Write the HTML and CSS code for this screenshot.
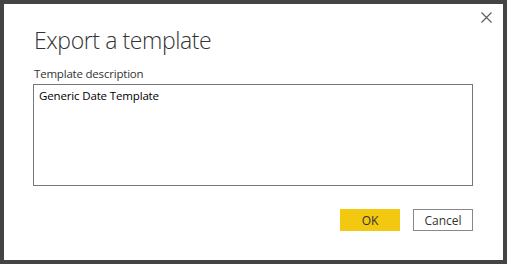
FILE: index.html
```html
<!DOCTYPE html>
<html lang="en">
  <head>
    <meta charset="UTF-8" />
    <title>Export a template</title>
    <link rel="stylesheet" href="styles.css">
  </head>
  <body>
    <div class="dialog">
      <div class="title-row">
        <h1 class="title">Export a template</h1>
        <button class="close" aria-label="Close">
          <svg width="11" height="11" viewBox="0 0 11 11">
            <path d="M0.5 0.5 L10.5 10.5 M10.5 0.5 L0.5 10.5" stroke="#5a5a5a" stroke-width="1.1" fill="none" />
          </svg>
        </button>
      </div>
      <label class="field-label" for="desc">Template description</label>
      <div class="textbox" id="desc">Generic Date Template</div>
      <div class="actions">
        <button class="btn btn-ok">OK</button>
        <button class="btn btn-cancel">Cancel</button>
      </div>
    </div>
  </body>
</html>
```

FILE: styles.css
```css
html,
body {
  margin: 0;
  height: 100%;
}
body {
  font-family: "Open Sans", "Noto Sans", sans-serif;
  background: #444;
}
.dialog {
  box-sizing: border-box;
  height: 264px;
  border: 4px solid #444;
  background: #fff;
  padding: 0 30px 0 29px;
  display: flex;
  flex-direction: column;
}
.title-row {
  display: flex;
  justify-content: space-between;
  align-items: flex-start;
}
.title {
  margin: 20px 0 0 1px;
  font-weight: 300;
  font-size: 23px;
  letter-spacing: -0.4px;
  line-height: 32px;
  color: #333;
}
.close {
  margin: 8px -19px 0 0;
  padding: 0;
  border: none;
  background: none;
  width: 11px;
  height: 11px;
  cursor: pointer;
}
.close svg {
  display: block;
}
.field-label {
  margin: 10px 0 0 1px;
  font-size: 11.5px;
  letter-spacing: -0.2px;
  line-height: 16px;
  color: #333;
}
.textbox {
  margin-top: 2px;
  height: 94px;
  border: 1px solid #777;
  padding: 3px 5px;
  font-size: 11.5px;
  letter-spacing: -0.15px;
  line-height: 16px;
  color: #000;
}
.actions {
  display: flex;
  justify-content: flex-end;
  gap: 13px;
  margin-top: 23px;
}
.btn {
  box-sizing: border-box;
  width: 60px;
  height: 22px;
  font-family: inherit;
  font-size: 12px;
  color: #333;
  padding: 0;
  cursor: pointer;
}
.btn-ok {
  background: #f2c811;
  border: none;
}
.btn-cancel {
  background: #fff;
  border: 1px solid #888;
}
```
